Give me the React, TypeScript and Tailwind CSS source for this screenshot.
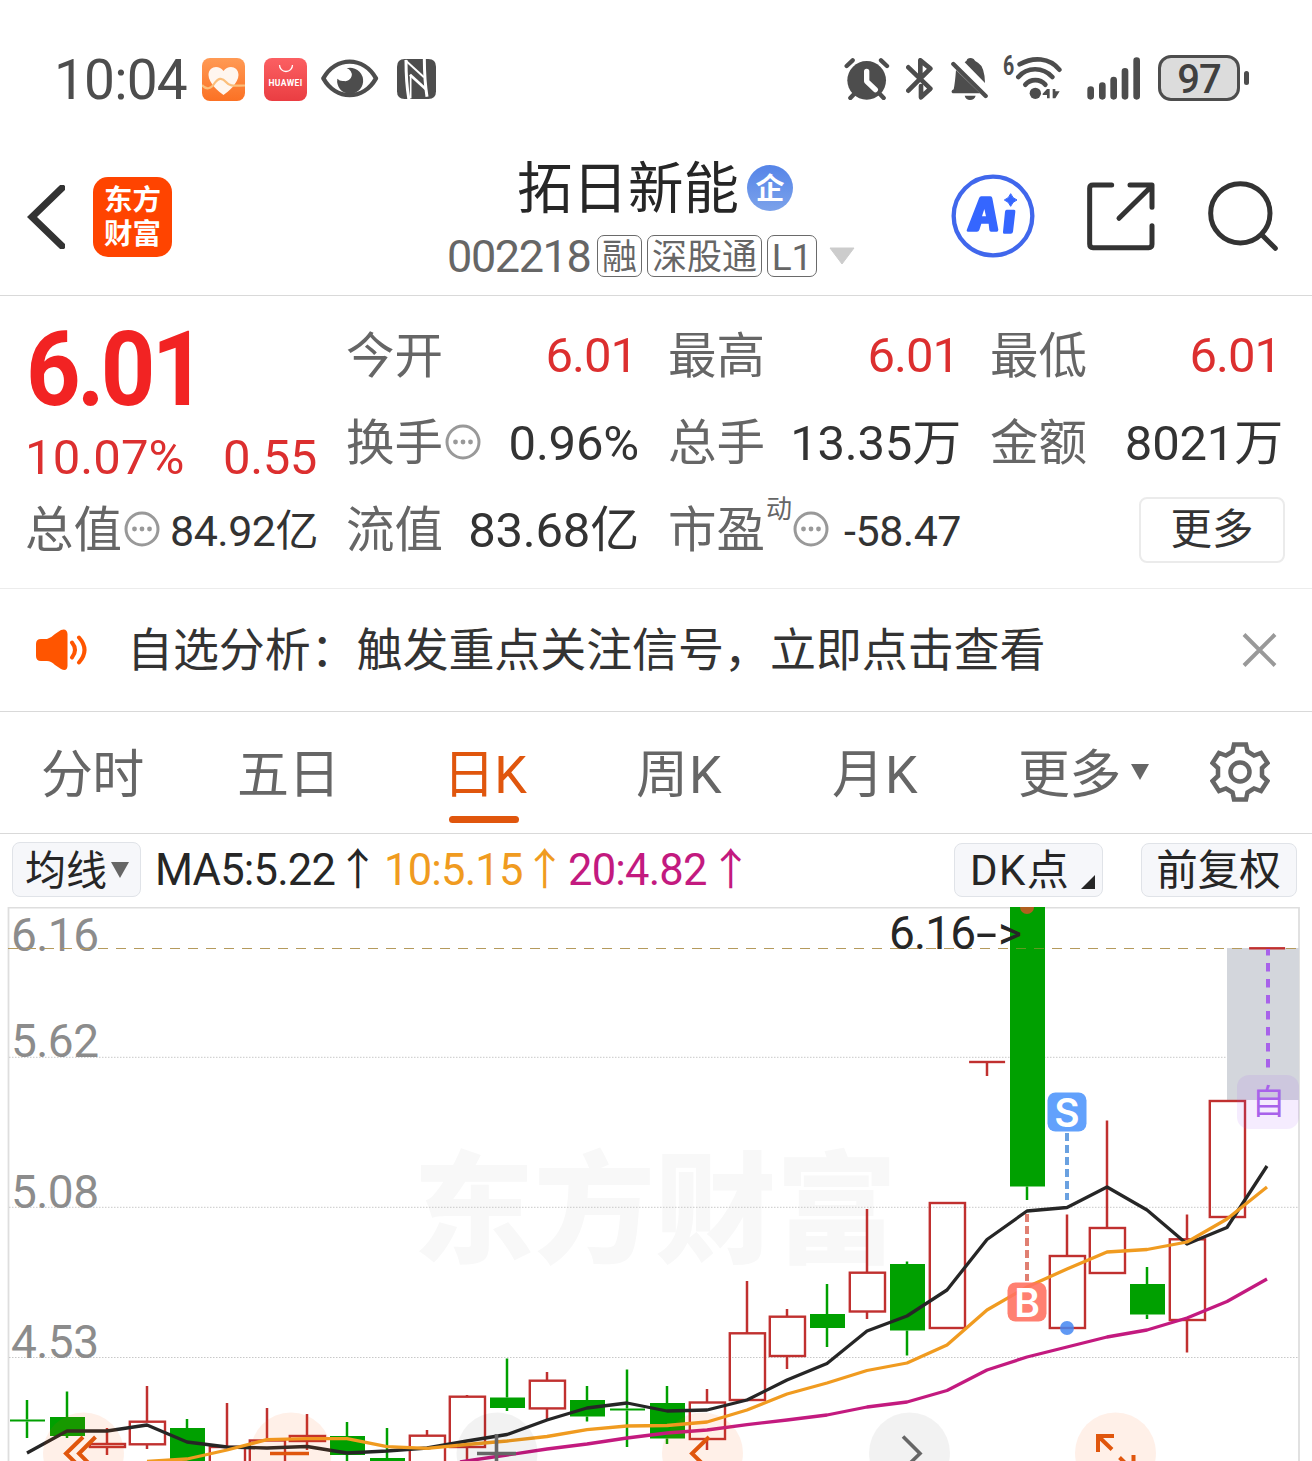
import type { ReactNode } from 'react';

type Tone = 'red' | 'dark';

type Candle = {
  x: number;
  high: number;
  top: number;
  bottom: number;
  low: number;
  up: boolean;
};

// x, high, body top, body bottom, low, rising
const RAW: [number, number, number, number, number, boolean][] = [
  [27, 1400, 1419.5, 1421.5, 1438, false],
  [67, 1391.5, 1417, 1436, 1438, false],
  [107, 1428, 1444, 1447, 1455, true],
  [147, 1386, 1421.7, 1444.3, 1449, true],
  [187, 1419, 1428, 1480, 1480, false],
  [227, 1403, 1447, 1480, 1480, true],
  [267, 1408, 1440.5, 1480, 1480, true],
  [307, 1414, 1436, 1441, 1450, true],
  [347, 1422, 1436, 1455, 1470, false],
  [387, 1428, 1458, 1480, 1480, false],
  [427, 1430, 1435.7, 1480, 1480, true],
  [467, 1395, 1396.7, 1447, 1470, true],
  [507, 1358.5, 1397.5, 1408, 1411, false],
  [547, 1372, 1380.7, 1408.4, 1420, true],
  [587, 1386, 1400, 1416.5, 1421.5, false],
  [627, 1369.5, 1408.5, 1410.5, 1447, false],
  [667, 1386, 1403, 1438.5, 1444, false],
  [707, 1389, 1402.5, 1439, 1450, true],
  [747, 1281, 1333.3, 1400, 1400, true],
  [787, 1309, 1316.7, 1356, 1369, true],
  [827, 1284, 1314, 1328, 1347, false],
  [867, 1209, 1272.7, 1311.5, 1319, true],
  [907, 1261.5, 1264, 1330.5, 1355.5, false],
  [947, 1203, 1203, 1328, 1328, true],
  [987, 1062, 1061.5, 1062.5, 1076, true],
  [1027, 907, 907, 1186.5, 1200, false],
  [1067, 1214.5, 1256, 1328, 1328, true],
  [1107, 1120.5, 1228, 1273, 1273, true],
  [1147, 1267, 1284, 1314.5, 1319, false],
  [1187, 1214.5, 1239.3, 1320, 1352.5, true],
  [1227, 1101, 1101, 1217, 1217, true],
  [1267, 948, 947.8, 948.8, 948, true],
];

const CANDLES: Candle[] = RAW.map(([x, high, top, bottom, low, up]) => ({ x, high, top, bottom, low, up }));

const MA5 =
  '27,1453 67,1431 107,1431 147,1425 187,1442 227,1447 267,1448 307,1446.5 347,1453 387,1451 427,1448 467,1441 507,1434.5 547,1420 587,1408 627,1403 667,1411 707,1410 747,1400 787,1380 827,1363.5 867,1331 907,1316 947,1290 987,1239.5 1027,1211 1067,1207.5 1107,1187 1147,1210 1187,1244 1227,1227.5 1267,1166';
const MA10 =
  '147,1461.5 187,1459 227,1450 267,1439.7 307,1438.7 347,1438.7 387,1446.7 427,1448.3 467,1444.5 507,1441 547,1436.5 587,1429.7 627,1426 667,1425.5 707,1422 747,1410 787,1394 827,1383 867,1370.5 907,1363 947,1345 987,1310 1027,1287 1067,1269 1107,1252 1147,1249.5 1187,1242 1227,1219 1267,1187';
const MA20 =
  '460,1462 507,1455 547,1449 587,1444 627,1438 667,1433 707,1430 747,1424.7 787,1420 827,1415 867,1407 907,1402 947,1390.5 987,1370 1027,1357 1067,1347 1107,1337 1147,1330 1187,1318 1227,1301.5 1267,1279';

const LEVELS = [
  { label: '6.16', y: 951 },
  { label: '5.62', y: 1057 },
  { label: '5.08', y: 1208 },
  { label: '4.53', y: 1358 },
];

function StatusBar() {
  return (
    <div className="flex h-[140px] items-start justify-between pl-[54px] pr-[63px] text-[#4d4d4d]">
      <div className="flex items-start">
        <span className="mt-[50px] w-[148px] text-[55px] leading-[60px] tracking-[-0.800px]">10:04</span>
        <svg className="mt-[57.500px] h-[43px] w-[43px]" viewBox="0 0 43 43">
          <defs>
            <linearGradient id="health" x1="0" y1="0" x2="0" y2="1">
              <stop offset="0" stopColor="#ff9a55" />
              <stop offset="1" stopColor="#fb7124" />
            </linearGradient>
          </defs>
          <rect width="43" height="43" rx="8" fill="url(#health)" />
          <path
            d="M21.5 37 C17 34 6.5 25 6.5 17 C6.5 8 17 6.500 21.500 13 C26 6.500 36.500 8 36.500 17 C36.500 25 26 34 21.500 37Z"
            fill="#fff6ef"
          />
          <path d="M0 27 C4 32 9 31 12 26 C16 20 20 19 24 24 C28 29 33 27.500 43 27.500" fill="none" stroke="#fbbf7c" strokeWidth="2.200" />
        </svg>
        <div className="ml-[19px] mt-[57.500px] flex h-[43px] w-[43px] flex-col items-center rounded-[8px] bg-gradient-to-b from-[#fb5f62] to-[#ea3d42]">
          <svg className="mt-[6px] h-[9px] w-[16px]" viewBox="0 0 16 9">
            <path d="M1.500 1 A6.500 6.500 0 0 0 14.500 1" fill="none" stroke="#fff" strokeWidth="1.300" />
          </svg>
          <span className="mt-[5px] text-[8.500px] font-bold leading-[10px] tracking-[0.400px] text-white">HUAWEI</span>
        </div>
        <svg className="ml-[14px] mt-[58px] h-[40px] w-[58px]" viewBox="965 86 174 120">
          <path d="M972 147 C1010 80 1092 80 1130 147 C1092 214 1010 214 972 147Z" fill="none" stroke="currentColor" strokeWidth="13" strokeLinejoin="round" />
          <path d="M1042 117 A39 39 0 1 1 1014 148 Q1022 157 1034 155 A19 19 0 0 0 1042 117Z" fill="currentColor" />
        </svg>
        <svg className="ml-[18px] mt-[59px] h-[40px] w-[39px]" viewBox="1191 87 117 120">
          <path d="M1214 87 H1285 Q1308 87 1308 110 V184 Q1308 207 1285 207 H1214 Q1191 207 1191 184 V110 Q1191 87 1214 87Z" fill="currentColor" />
          <g fill="none" stroke="#fff">
            <path d="M1218 90 Q1218 160 1227 210" strokeWidth="9" />
            <path d="M1273 84 Q1273 150 1281 200" strokeWidth="9" />
            <path d="M1216 91 L1272 142" strokeWidth="6" />
            <path d="M1230 134 L1278 178" strokeWidth="8" />
            <path d="M1232 134 V205" strokeWidth="5" />
          </g>
        </svg>
      </div>
      <div className="flex items-start">
        <svg className="mt-[58px] h-[42px] w-[46px]" viewBox="68 84 138 126">
          <g stroke="currentColor" strokeLinecap="round" strokeWidth="13">
            <path d="M76 108 L94 91 M179 91 L197 108 M87 204 L102 188 M187 204 L172 188" />
          </g>
          <circle cx="136" cy="151" r="58" fill="currentColor" />
          <path d="M136 124 V154 L162 179" fill="none" stroke="#fff" strokeWidth="16" strokeLinecap="round" strokeLinejoin="round" />
        </svg>
        <svg className="ml-[16px] mt-[58px] h-[42px] w-[27px]" viewBox="258 84 81 126">
          <path
            d="M265 112 L331 176 L303 202 V168 M265 182 L331 116 L301 91 V142"
            fill="none"
            stroke="currentColor"
            strokeWidth="14"
            strokeLinecap="round"
            strokeLinejoin="round"
          />
        </svg>
        <svg className="ml-[18px] mt-[58px] h-[42px] w-[37px]" viewBox="393 84 111 126">
          <path d="M434 97 Q441 92 442 87 Q451 81 461 87 Q464 93 474 98 Q494 110 495 159Z" fill="currentColor" />
          <path d="M408 120 L480 190 H398 Q390 183 401 178 Q405 160 408 120Z M434 197 H467 Q463 210 450 210 Q438 210 434 197Z" fill="currentColor" />
          <path d="M400 102 L497 198" stroke="currentColor" strokeWidth="13" strokeLinecap="round" />
        </svg>
        <div className="flex items-start pl-[15px]">
          <span className="mt-[52px] w-[11px] origin-left scale-x-[0.7] text-[28px] font-bold leading-[28px]">6</span>
          <svg className="mt-[56px] h-[43px] w-[50px]" viewBox="583 78 150 129">
            <g fill="none" stroke="currentColor" strokeWidth="14" strokeLinecap="round">
              <path d="M600 103 C640 80 690 82 719 119" />
              <path d="M596 141 C622 110 670 110 698 141" />
              <path d="M617 164 C633 146 661 146 677 164" />
            </g>
            <circle cx="647" cy="190" r="17" fill="currentColor" />
            <path d="M669 191 L682 177 H690 V205 H682 V195 H669Z M699 177 H707 V184 H720 L707 205 H699Z" fill="currentColor" />
          </svg>
        </div>
        <svg className="ml-[23px] mt-[57px] h-[43px] w-[54px]" viewBox="800 80 162 129">
          <path d="M811 178 V198 M846 166 V198 M880 149 V198 M914 123 V198 M949 91 V198" stroke="currentColor" strokeWidth="20" strokeLinecap="round" />
        </svg>
        <div className="ml-[17px] mt-[55px] flex items-center">
          <div className="flex h-[46px] w-[82px] items-center justify-center rounded-[13px] border-[3px] border-[#4d4d4d] bg-[#dcdcdc] pt-[3px] text-[40px] font-medium leading-[40px] tracking-[-1px] text-[#404040]">
            97
          </div>
          <div className="ml-[4px] h-[14px] w-[5px] rounded-full bg-[#4d4d4d]" />
        </div>
      </div>
    </div>
  );
}

function Tag({ children, className }: { children: ReactNode; className: string }) {
  return (
    <span className={`flex h-[42px] items-center justify-center rounded-[7px] border border-[#6a6a6a] pt-[4px] text-[35px] leading-[38px] ${className}`}>
      {children}
    </span>
  );
}

function Header() {
  return (
    <header className="flex h-[156px] items-start border-b border-[#d9d9d9] pl-[27px]">
      <svg className="mt-[45px] h-[64px] w-[38px]" viewBox="27 185 38 64">
        <path d="M62 188 L32 217 L62 246" fill="none" stroke="#333" strokeWidth="7" strokeLinecap="square" />
      </svg>
      <div className="ml-[28px] mt-[37px] flex h-[80px] w-[79px] flex-col items-center justify-center rounded-[15px] bg-[#ff4400] text-[28.500px] font-bold leading-[34px] text-white">
        <span className="mt-[2px]">东方</span>
        <span>财富</span>
      </div>
      <div className="ml-[275px] w-[412px]">
        <div className="mt-[15px] flex h-[66px] items-center pl-[70px]">
          <h1 className="w-[230px] pt-[4px] text-[55.500px] leading-[66px] text-[#262626]">拓日新能</h1>
          <span className="flex h-[46px] w-[46px] items-center justify-center rounded-full bg-gradient-to-b from-[#5584e8] to-[#7ca2ea] pt-[2px] text-[29px] font-bold leading-[40px] text-white">
            企
          </span>
        </div>
        <div className="mt-[14px] flex h-[42px] items-center text-[#666]">
          <span className="w-[150px] pt-[2px] text-[45px] leading-[42px] tracking-[-1.400px]">002218</span>
          <Tag className="w-[45px]">融</Tag>
          <Tag className="ml-[5px] w-[115px]">深股通</Tag>
          <Tag className="ml-[5px] w-[50px] text-[37px]">L1</Tag>
          <svg className="ml-[12px] h-[18px] w-[26px]" viewBox="0 0 26 18">
            <path d="M1 1 H25 L13 17Z" fill="#ccc" stroke="#ccc" strokeLinejoin="round" />
          </svg>
        </div>
      </div>
      <svg className="ml-[92px] mt-[34px] h-[84px] w-[84px]" viewBox="395 433 252 252">
        <circle cx="521" cy="559" r="118" fill="none" stroke="#4067ec" strokeWidth="13" />
        <g fill="#3566ff">
          <path
            fillRule="evenodd"
            d="M486 500 H513 Q518 500 519 506 L537 600 Q537 606 532 606 H515 Q511 606 510 601 L508 582 H486 L480 601 Q478 606 473 606 H446 Q440 606 443 599 L479 506 Q481 500 486 500Z M495 538 L488 560 H500 Z"
          />
          <path d="M562 540 H584 Q589 540 588 546 L581 606 Q580 612 574 612 H554 Q550 612 551 606 L557 546 Q558 540 562 540Z" />
          <path d="M574 492 Q579 506 593 511 Q579 516 574 530 Q569 516 555 511 Q569 506 574 492Z" stroke="#3566ff" strokeWidth="3" />
        </g>
      </svg>
      <svg className="ml-[52px] mt-[42px] h-[69px] w-[69px]" viewBox="800 456 207 207">
        <g fill="none" stroke="#333" strokeWidth="15" strokeLinecap="round" strokeLinejoin="round">
          <path d="M874 465 H818 Q808 465 808 475 V642 Q808 653 818 653 H985 Q995 653 995 643 V587" />
          <path d="M929 465 H995 V532 M992 470 L896 565" />
        </g>
      </svg>
      <svg className="ml-[52px] mt-[41px] h-[71px] w-[71px]" viewBox="1163 452 213 213">
        <g fill="none" stroke="#333" strokeWidth="15" strokeLinecap="round">
          <circle cx="1260" cy="549" r="89" />
          <path d="M1325 614 L1365 654" />
        </g>
      </svg>
    </header>
  );
}

function InfoDot() {
  return (
    <svg className="-mt-[2px] ml-[2px] h-[36px] w-[36px] shrink-0" viewBox="0 0 36 36">
      <circle cx="18" cy="18" r="16" fill="none" stroke="#999" strokeWidth="3" />
      <g fill="#999">
        <circle cx="10.500" cy="18" r="2.400" />
        <circle cx="18" cy="18" r="2.400" />
        <circle cx="25.500" cy="18" r="2.400" />
      </g>
    </svg>
  );
}

type QuoteCellProps = {
  label: string;
  value: string;
  tone?: Tone;
  info?: boolean;
  small?: boolean;
  sup?: string;
};

function QuoteCell({ label, value, tone = 'dark', info, small, sup }: QuoteCellProps) {
  return (
    <div className="flex h-[87px] w-[293px] items-center justify-between">
      <div className="flex items-center">
        <span className="pt-[3px] text-[48.500px] leading-[60px] text-[#666]">{label}</span>
        {sup && <span className="-mt-[42px] ml-[1px] w-[25px] whitespace-nowrap text-[26px] leading-[28px] text-[#666]">{sup}</span>}
        {info && <InfoDot />}
      </div>
      <span
        className={`whitespace-nowrap ${small ? 'text-[43px] tracking-[-0.500px]' : ''} ${
          tone === 'red' ? 'pr-[2px] text-[49px] tracking-[-1px] text-[#dc2f2f]' : 'pt-[2px] text-[#333]'
        } ${!small && tone === 'dark' ? 'text-[49px] tracking-[-0.200px]' : ''} leading-[60px]`}
      >
        {value}
      </span>
    </div>
  );
}

function Quote() {
  return (
    <section className="flex h-[293px] gap-[29px] border-b border-[#ececec] pl-[25px] pt-[16px]">
      <div className="w-[292px] shrink-0">
        <div className="h-[117px] origin-left scale-x-[0.925] pl-[1px] pt-[3px] text-[103px] font-bold leading-[110px] tracking-[-4px] text-[#f22323]">6.01</div>
        <div className="flex h-[57px] justify-between text-[49px] leading-[58px] text-[#dc2f2f]">
          <span className="tracking-[0.100px]">10.07%</span>
          <span className="tracking-[-0.400px]">0.55</span>
        </div>
        <QuoteCell label="总值" value="84.92亿" info small />
      </div>
      <div className="grid h-[261px] grid-cols-[293px_293px_293px] gap-x-[29px]">
        <QuoteCell label="今开" value="6.01" tone="red" />
        <QuoteCell label="最高" value="6.01" tone="red" />
        <QuoteCell label="最低" value="6.01" tone="red" />
        <QuoteCell label="换手" value="0.96%" info />
        <QuoteCell label="总手" value="13.35万" />
        <QuoteCell label="金额" value="8021万" />
        <QuoteCell label="流值" value="83.68亿" />
        <QuoteCell label="市盈" value="-58.47" sup="动" info small />
        <div className="flex h-[87px] items-center justify-end">
          <button className="-mr-[2px] h-[66px] w-[146px] rounded-[8px] border-2 border-[#ebebeb] text-[41.500px] leading-[57px] text-[#333]">更多</button>
        </div>
      </div>
    </section>
  );
}

function Banner() {
  return (
    <section className="flex h-[123px] items-center border-b border-[#d9d9d9] pl-[35px] pr-[34px]">
      <svg className="h-[44px] w-[54px]" viewBox="35 627 54 44">
        <path
          d="M41 638 H47 Q51 637 55 633 L61 629 Q67 627 67.500 633 V665 Q67 671 61 668 L55 664 Q51 660 47 660 H41 Q36 660 36 655 V643 Q36 638 41 638Z"
          fill="#ff5500"
        />
        <path d="M72 641.500 Q78 649 72 656.500 M79 636.500 Q90 649 79 661.500" fill="none" stroke="#ff5500" strokeWidth="4" strokeLinecap="round" />
      </svg>
      <p className="-mt-[1px] ml-[38px] flex-1 whitespace-nowrap text-[46px] leading-[60px] tracking-[-0.080px] text-[#333]">
        自选分析：触发重点关注信号，立即点击查看
      </p>
      <svg className="h-[36px] w-[37px]" viewBox="0 0 37 36">
        <path d="M3 2.500 L34 33.500 M34 2.500 L3 33.500" stroke="#999" strokeWidth="4" />
      </svg>
    </section>
  );
}

function Tabs() {
  return (
    <nav className="flex h-[122px] items-start border-b border-[#d9d9d9] pl-[41px] text-[52px] leading-[70px] tracking-[-0.800px] text-[#666]">
      <span className="mt-[29px] w-[196px]">分时</span>
      <span className="mt-[29px] w-[206px]">五日</span>
      <div className="w-[193px] text-[#e0560d]">
        <span className="mt-[29px] block h-[75px]">日K</span>
        <div className="ml-[6px] h-[7px] w-[70px] rounded-full bg-[#e0560d]" />
      </div>
      <span className="mt-[29px] w-[196px] tracking-[1px]">周K</span>
      <span className="mt-[29px] w-[186px] tracking-[1px]">月K</span>
      <span className="mt-[29px] w-[113px]">更多</span>
      <svg className="mt-[52px] h-[16px] w-[18px]" viewBox="0 0 18 16">
        <path d="M0 0 H18 L9 16Z" fill="#666" />
      </svg>
      <svg className="ml-[61px] mt-[30px] h-[60px] w-[60px]" viewBox="-30 -30 60 60">
        <g fill="none" stroke="#666" strokeWidth="4.500">
          <path d="M-6 -27.500 H6 L7.500 -20.500 L14 -16.500 L21 -19 L27.500 -9 L22 -4 V4 L27.500 9 L21 19 L14 16.500 L7.500 20.500 L6 27.500 H-6 L-7.500 20.500 L-14 16.500 L-21 19 L-27.500 9 L-22 4 V-4 L-27.500 -9 L-21 -19 L-14 -16.500 L-7.500 -20.500Z" />
          <circle r="9.500" />
        </g>
      </svg>
    </nav>
  );
}

function Averages() {
  return (
    <div className="flex h-[73px] items-start pl-[12px] pt-[8px] text-[41px] leading-[50px] text-[#262626]">
      <button className="flex h-[55px] w-[129px] items-start rounded-[8px] border border-[#e0e3e8] bg-[#f6f7fa] pl-[8px]">
        <span className="w-[90px] pt-[3px]">均线</span>
        <svg className="mt-[19px] h-[16px] w-[18px]" viewBox="0 0 18 16">
          <path d="M0 0 H18 L9 16Z" fill="#666" />
        </svg>
      </button>
      <div className="flex pl-[14px] pt-[4px] text-[43.500px] tracking-[-0.800px]">
        <span className="w-[181px] whitespace-nowrap">MA5:5.22</span>
        <span className="w-[48px]">↑</span>
        <span className="w-[139px] whitespace-nowrap text-[#f09b20]">10:5.15</span>
        <span className="w-[45px] text-[#f09b20]">↑</span>
        <span className="w-[141px] whitespace-nowrap text-[#c31a7f]">20:4.82</span>
        <span className="w-[60px] text-[#c31a7f]">↑</span>
      </div>
      <button className="ml-auto mt-[1px] flex h-[54px] w-[149px] items-start rounded-[8px] border border-[#e0e3e8] bg-[#f6f7fa] pl-[15px]">
        <span className="w-[111px] pt-[2px] text-left text-[42px] tracking-[1.400px]">DK点</span>
        <svg className="mt-[31px] h-[14px] w-[14px]" viewBox="0 0 14 14">
          <path d="M14 0 V14 H0Z" fill="#262626" />
        </svg>
      </button>
      <button className="ml-[38px] mr-[15px] mt-[1px] h-[54px] w-[156px] rounded-[8px] border border-[#e0e3e8] bg-[#f6f7fa] pr-[1px] pt-[1px] text-[41.500px]">
        前复权
      </button>
    </div>
  );
}

function CandleMark({ candle }: { candle: Candle }) {
  const { x, high, top, bottom, low, up } = candle;
  const color = up ? '#c0302f' : '#00a000';
  const flat = bottom - top < 2;
  return (
    <g stroke={color} strokeWidth="2.500">
      {high < top && <path d={`M${x} ${high} V${top}`} />}
      {low > bottom && <path d={`M${x} ${bottom} V${low}`} />}
      {up ? (
        <rect x={x - 17.2} y={top} width={flat ? 34.6 : 35.2} height={bottom - top} fill="none" strokeWidth={flat ? 1.4 : 2.4} />
      ) : (
        <rect x={x - 17} y={top} width="35" height={bottom - top} fill={color} stroke="none" />
      )}
    </g>
  );
}

function Chart() {
  return (
    <svg className="block h-[554px] w-[1312px]" viewBox="0 907 1312 554">
      <text x="413" y="1253" fontSize="121" fontWeight="900" textLength="484" fill="#f8f8f8">
        东方财富
      </text>
      <path d="M8.500 1461 V907.500 H1299 V1461" fill="none" stroke="#dedede" strokeWidth="1.800" />
      <path d="M9 1057.300 H1299 M9 1207.300 H1299 M9 1357.500 H1299" stroke="#c8c8c8" strokeWidth="1" strokeDasharray="1.500 1.500" />
      <rect x="1227" y="948" width="72" height="152" fill="#d3d6dc" />
      {LEVELS.map((l) => (
        <text key={l.label} x="11" y={l.y} fontSize="46" textLength="88" fill="#8c8c8c">
          {l.label}
        </text>
      ))}
      <path d="M8 948.500 H1299" stroke="#b59a5c" strokeWidth="1.200" strokeDasharray="10 8" />
      {CANDLES.map((c) => (
        <CandleMark key={c.x} candle={c} />
      ))}
      <path d="M1016 948.500 H1026 M1034 948.500 H1044" stroke="#5f9c20" strokeWidth="1.200" />
      <path d="M1020 907 A7 7 0 0 0 1034 907Z" fill="#b0601f" />
      <text x="889" y="949" fontSize="46" fill="#262626">
        <tspan textLength="87" lengthAdjust="spacing">6.16</tspan>
        <tspan x="976" textLength="21" lengthAdjust="spacingAndGlyphs">-</tspan>
        <tspan x="998">{'>'}</tspan>
      </text>
      <g fill="none" strokeWidth="3.300" strokeLinejoin="round">
        <polyline points={MA5} stroke="#262626" />
        <polyline points={MA10} stroke="#f09b20" />
        <polyline points={MA20} stroke="#c31a7f" />
      </g>

      {/* trade markers */}
      <path d="M1067 1133 V1200" stroke="#6aa1e0" strokeWidth="4" strokeDasharray="8 4" />
      <rect x="1047.500" y="1092.500" width="39" height="39" rx="8" fill="#62a1fc" />
      <text x="1067" y="1126.500" fontSize="39" fontWeight="600" textAnchor="middle" fill="#fff" className="font-['Inter']">
        S
      </text>
      <path d="M1027 1214 V1281" stroke="#e07f72" strokeWidth="4" strokeDasharray="8 4" />
      <rect x="1007.500" y="1282.500" width="39" height="39" rx="8" fill="#ff7262" fillOpacity="0.900" />
      <text x="1027" y="1316.500" fontSize="39" fontWeight="600" textAnchor="middle" fill="#fff" className="font-['Inter']">
        B
      </text>
      <circle cx="1067" cy="1328" r="7" fill="#4487f2" fillOpacity="0.850" />
      <path d="M1268 949 V1068" stroke="#a862ea" strokeWidth="4" strokeDasharray="8.500 7.500" strokeDashoffset="2" />
      <rect x="1237" y="1075" width="62" height="54" rx="12" fill="#a855f7" fillOpacity="0.110" />
      <text x="1268.500" y="1114" fontSize="34" textAnchor="middle" fill="#a862ea">
        自
      </text>

      {/* chart controls */}
      <g fill="#ff5500" fillOpacity="0.090">
        <circle cx="83.500" cy="1453" r="40.500" />
        <circle cx="291" cy="1453" r="40.500" />
        <circle cx="702.500" cy="1453" r="40.500" />
        <circle cx="1115.500" cy="1453" r="40.500" />
      </g>
      <g fill="#000" fillOpacity="0.050">
        <circle cx="497" cy="1453" r="40.500" />
        <circle cx="909.500" cy="1453" r="40.500" />
      </g>
      <g fill="none" stroke="#e0560d" strokeWidth="4">
        <path d="M83 1437 L66 1453.500 L83 1470 M95.500 1437 L79 1453.500 L95.500 1470" />
        <path d="M270 1453.500 H309" strokeWidth="3.500" />
        <path d="M709 1437 L692 1453.500 L709 1470" />
        <path d="M1114 1436 H1098 V1452 M1098 1436 L1112 1449.500" />
        <path d="M1133.500 1455 V1471 H1117 M1133.500 1471 L1119.500 1457.500" />
      </g>
      <g fill="none" stroke="#666" strokeWidth="3.600">
        <path d="M477 1453.500 H516 M496.500 1434 V1473" />
        <path d="M903 1436.500 L920 1453.500 L903 1470" />
      </g>
    </svg>
  );
}

export default function App() {
  return (
    <main className="h-[1461px] w-[1312px] overflow-hidden bg-white font-['Roboto','Noto_Sans_CJK_SC',sans-serif]">
      <StatusBar />
      <Header />
      <Quote />
      <Banner />
      <Tabs />
      <Averages />
      <Chart />
    </main>
  );
}
